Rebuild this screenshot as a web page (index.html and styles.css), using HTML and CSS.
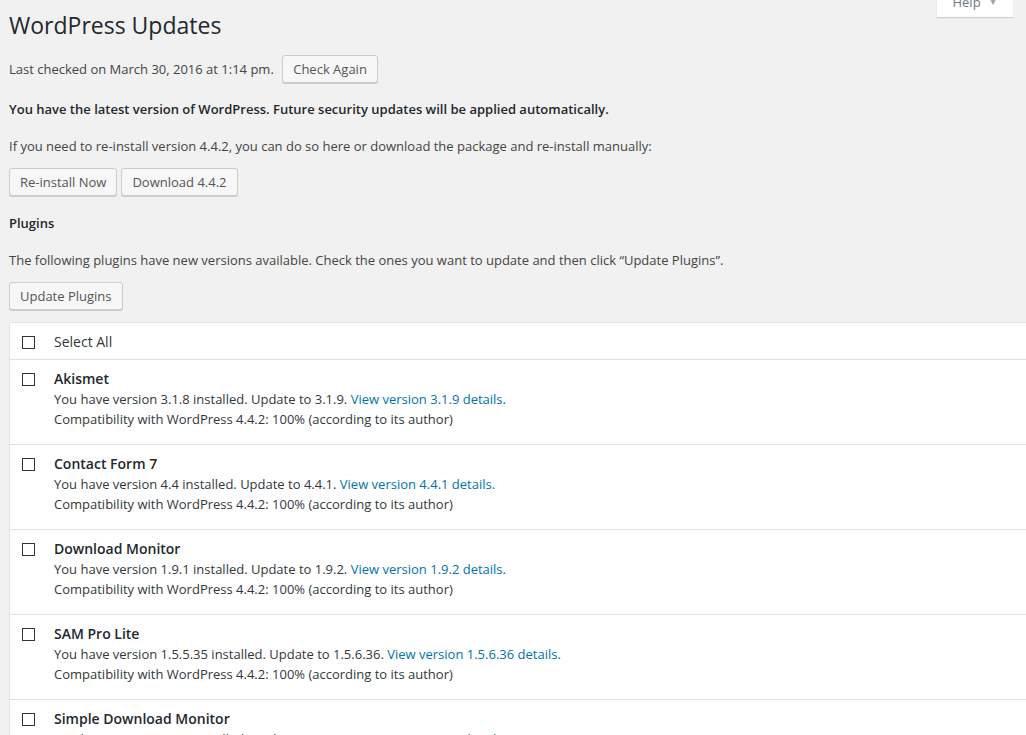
FILE: index.html
```html
<!DOCTYPE html>
<html>
<head>
<meta charset="utf-8">
<link rel="stylesheet" href="styles.css">
</head>
<body>
<div class="help-tab"><span>Help</span><span class="arrow">▼</span></div>
<div class="wrap">
  <h1 class="title">WordPress Updates</h1>
  <p class="checked">Last checked on March 30, 2016 at 1:14 pm. <button class="btn">Check Again</button></p>
  <h2 class="latest">You have the latest version of WordPress. Future security updates will be applied automatically.</h2>
  <p class="para">If you need to re-install version 4.4.2, you can do so here or download the package and re-install manually:</p>
  <div class="btn-row">
    <button class="btn">Re-install Now</button>
    <button class="btn">Download 4.4.2</button>
  </div>
  <h3 class="plugins-h">Plugins</h3>
  <p class="para">The following plugins have new versions available. Check the ones you want to update and then click “Update Plugins”.</p>
  <div class="btn-row"><button class="btn">Update Plugins</button></div>
  <div class="table">
    <div class="row head">
      <span class="cb"></span>
      <span class="label">Select All</span>
    </div>
    <div class="row">
      <span class="cb"></span>
      <div class="info">
        <strong>Akismet</strong>
        <div>You have version 3.1.8 installed. Update to 3.1.9. <a href="#">View version 3.1.9 details.</a></div>
        <div>Compatibility with WordPress 4.4.2: 100% (according to its author)</div>
      </div>
    </div>
    <div class="row">
      <span class="cb"></span>
      <div class="info">
        <strong>Contact Form 7</strong>
        <div>You have version 4.4 installed. Update to 4.4.1. <a href="#">View version 4.4.1 details.</a></div>
        <div>Compatibility with WordPress 4.4.2: 100% (according to its author)</div>
      </div>
    </div>
    <div class="row">
      <span class="cb"></span>
      <div class="info">
        <strong>Download Monitor</strong>
        <div>You have version 1.9.1 installed. Update to 1.9.2. <a href="#">View version 1.9.2 details.</a></div>
        <div>Compatibility with WordPress 4.4.2: 100% (according to its author)</div>
      </div>
    </div>
    <div class="row">
      <span class="cb"></span>
      <div class="info">
        <strong>SAM Pro Lite</strong>
        <div>You have version 1.5.5.35 installed. Update to 1.5.6.36. <a href="#">View version 1.5.6.36 details.</a></div>
        <div>Compatibility with WordPress 4.4.2: 100% (according to its author)</div>
      </div>
    </div>
    <div class="row">
      <span class="cb"></span>
      <div class="info">
        <strong>Simple Download Monitor</strong>
        <div>You have version 3.3.0 installed. Update to 3.3.1. <a href="#">View version 3.3.1 details.</a></div>
        <div>Compatibility with WordPress 4.4.2: 100% (according to its author)</div>
      </div>
    </div>
  </div>
</div>
</body>
</html>
```
FILE: styles.css
```css
html, body {
  margin: 0;
  padding: 0;
  background: #f1f1f1;
  overflow: hidden;
  height: 735px;
}
body {
  font-family: "Open Sans", "Liberation Sans", sans-serif;
  font-size: 13px;
  line-height: 1.4em;
  color: #444;
  position: relative;
}
.help-tab {
  position: absolute;
  right: 13px;
  top: -10px;
  width: 76px;
  height: 27px;
  background: #fff;
  box-shadow: 0 1px 1px rgba(0,0,0,0.15);
  box-sizing: border-box;
  display: flex;
  align-items: flex-end;
  justify-content: center;
  gap: 8px;
  color: #72777c;
  font-size: 13px;
  line-height: 20px;
  padding-bottom: 5px;
}
.help-tab .arrow {
  font-size: 9px;
  color: #a0a5aa;
}
.wrap {
  margin-left: 9px;
  width: 1040px;
}
.title {
  margin: 0;
  padding: 11px 0 2px;
  font-size: 23px;
  font-weight: 400;
  line-height: 29px;
  color: #23282d;
}
.checked {
  margin: 13px 0 0;
  line-height: 28px;
  color: #444;
}
.btn {
  font-family: "Open Sans", "Liberation Sans", sans-serif;
  font-size: 13px;
  height: 28px;
  line-height: 26px;
  padding: 0 10px 1px;
  background: #f7f7f7;
  border: 1px solid #ccc;
  border-radius: 3px;
  box-shadow: 0 1px 0 #ccc;
  color: #555;
  margin: 0;
  vertical-align: top;
  cursor: pointer;
}
.checked .btn {
  margin-left: 5px;
}
.latest {
  margin: 16px 0 0;
  font-size: 13px;
  font-weight: 600;
  line-height: 20px;
  color: #23282d;
}
.para {
  margin: 17px 0 0;
  line-height: 20px;
  color: #444;
}
.btn-row {
  margin-top: 12px;
  display: flex;
  gap: 4px;
}
.plugins-h {
  margin: 17px 0 0;
  font-size: 13px;
  font-weight: 600;
  line-height: 20px;
  color: #23282d;
}
.table {
  margin-top: 12px;
  background: #fff;
  border: 1px solid #e5e5e5;
  border-right: none;
  box-shadow: 0 1px 1px rgba(0,0,0,0.04);
}
.row {
  display: flex;
  align-items: flex-start;
  border-top: 1px solid #e1e1e1;
  padding: 9px 10px 15px 12px;
  color: #32373c;
}
.row:first-child {
  border-top: none;
}
.row.head {
  padding: 9px 10px 7px 12px;
  font-size: 14px;
  line-height: 20px;
}
.cb {
  width: 11px;
  height: 11px;
  border: 1px solid #333;
  background: #fff;
  margin-top: 4px;
  flex: none;
}
.label {
  margin-left: 19px;
  color: #32373c;
}
.info {
  margin-left: 19px;
  line-height: 20px;
}
.info strong {
  display: block;
  font-weight: 600;
  font-size: 14px;
  color: #23282d;
}
a {
  color: #0073aa;
  text-decoration: none;
}
```
